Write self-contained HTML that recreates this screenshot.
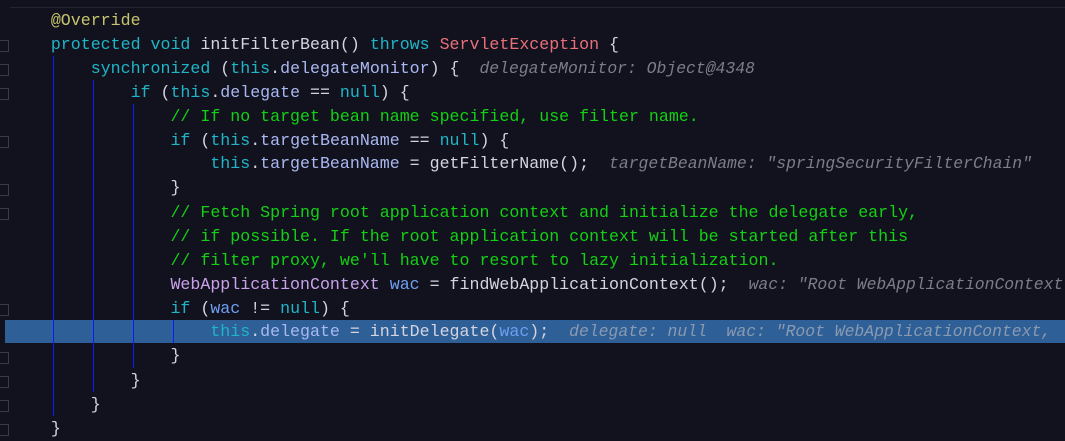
<!DOCTYPE html>
<html><head><style>
body{margin:0;width:1065px;height:433px;background:#12121e;overflow:hidden;position:relative;font-family:"Liberation Mono",monospace;font-size:16.62px;color:#d4d4e0}
.ln{position:absolute;left:1px;height:24px;line-height:24px;white-space:pre}
.k{color:#1fb5c6}.c{color:#14d014}.h{color:#7c7c8a;font-style:italic;font-size:16.4px}.a{color:#c6c46c}.r{color:#e8707a}.t{color:#c8a2ea}.v{color:#6f9ff2}.f{color:#a9b8f0}
.g{position:absolute;width:1px;background:#0a1cff}
.hl{position:absolute;left:5px;right:0;top:320px;height:23px;background:#2e5f97}
.top{position:absolute;left:10px;right:0;top:7px;height:1px;background:#24242f}
.fold{position:absolute;left:0;width:9px;height:12px;border:1px solid #3a3a44;border-left:none;box-sizing:border-box}
</style></head><body>
<div class="top"></div>
<div class="hl"></div>
<div class="fold" style="top:40px"></div><div class="fold" style="top:64px"></div><div class="fold" style="top:88px"></div>
<div class="fold" style="top:136px"></div><div class="fold" style="top:184px"></div><div class="fold" style="top:208px"></div>
<div class="fold" style="top:304px"></div><div class="fold" style="top:352px"></div><div class="fold" style="top:376px"></div><div class="fold" style="top:400px"></div><div class="fold" style="top:424px"></div>
<div class="g" style="left:53px;top:56px;height:360px"></div>
<div class="g" style="left:93px;top:80px;height:312px"></div>
<div class="g" style="left:133px;top:104px;height:264px"></div>
<div class="g" style="left:173px;top:320px;height:23px"></div>
<div class="ln" style="top:9px">     <span class="a">@Override</span></div>
<div class="ln" style="top:33px">     <span class="k">protected void</span> initFilterBean() <span class="k">throws</span> <span class="r">ServletException</span> {</div>
<div class="ln" style="top:57px">         <span class="k">synchronized</span> (<span class="k">this</span>.<span class="f">delegateMonitor</span>) {  <span class="h">delegateMonitor: Object@4348</span></div>
<div class="ln" style="top:81px">             <span class="k">if</span> (<span class="k">this</span>.<span class="f">delegate</span> == <span class="k">null</span>) {</div>
<div class="ln" style="top:105px">                 <span class="c">// If no target bean name specified, use filter name.</span></div>
<div class="ln" style="top:129px">                 <span class="k">if</span> (<span class="k">this</span>.<span class="f">targetBeanName</span> == <span class="k">null</span>) {</div>
<div class="ln" style="top:152px">                     <span class="k">this</span>.<span class="f">targetBeanName</span> = getFilterName();  <span class="h">targetBeanName: "springSecurityFilterChain"</span></div>
<div class="ln" style="top:176px">                 }</div>
<div class="ln" style="top:201px">                 <span class="c">// Fetch Spring root application context and initialize the delegate early,</span></div>
<div class="ln" style="top:225px">                 <span class="c">// if possible. If the root application context will be started after this</span></div>
<div class="ln" style="top:249px">                 <span class="c">// filter proxy, we'll have to resort to lazy initialization.</span></div>
<div class="ln" style="top:273px">                 <span class="t">WebApplicationContext</span> <span class="v">wac</span> = findWebApplicationContext();  <span class="h">wac: "Root WebApplicationContext</span></div>
<div class="ln" style="top:297px">                 <span class="k">if</span> (<span class="v">wac</span> != <span class="k">null</span>) {</div>
<div class="ln" style="top:320px">                     <span class="k">this</span>.<span class="f">delegate</span> = initDelegate(<span class="v">wac</span>);  <span class="h" style="color:#8a9ab0">delegate: null  wac: "Root WebApplicationContext,</span></div>
<div class="ln" style="top:344px">                 }</div>
<div class="ln" style="top:369px">             }</div>
<div class="ln" style="top:393px">         }</div>
<div class="ln" style="top:417px">     }</div>
</body></html>
